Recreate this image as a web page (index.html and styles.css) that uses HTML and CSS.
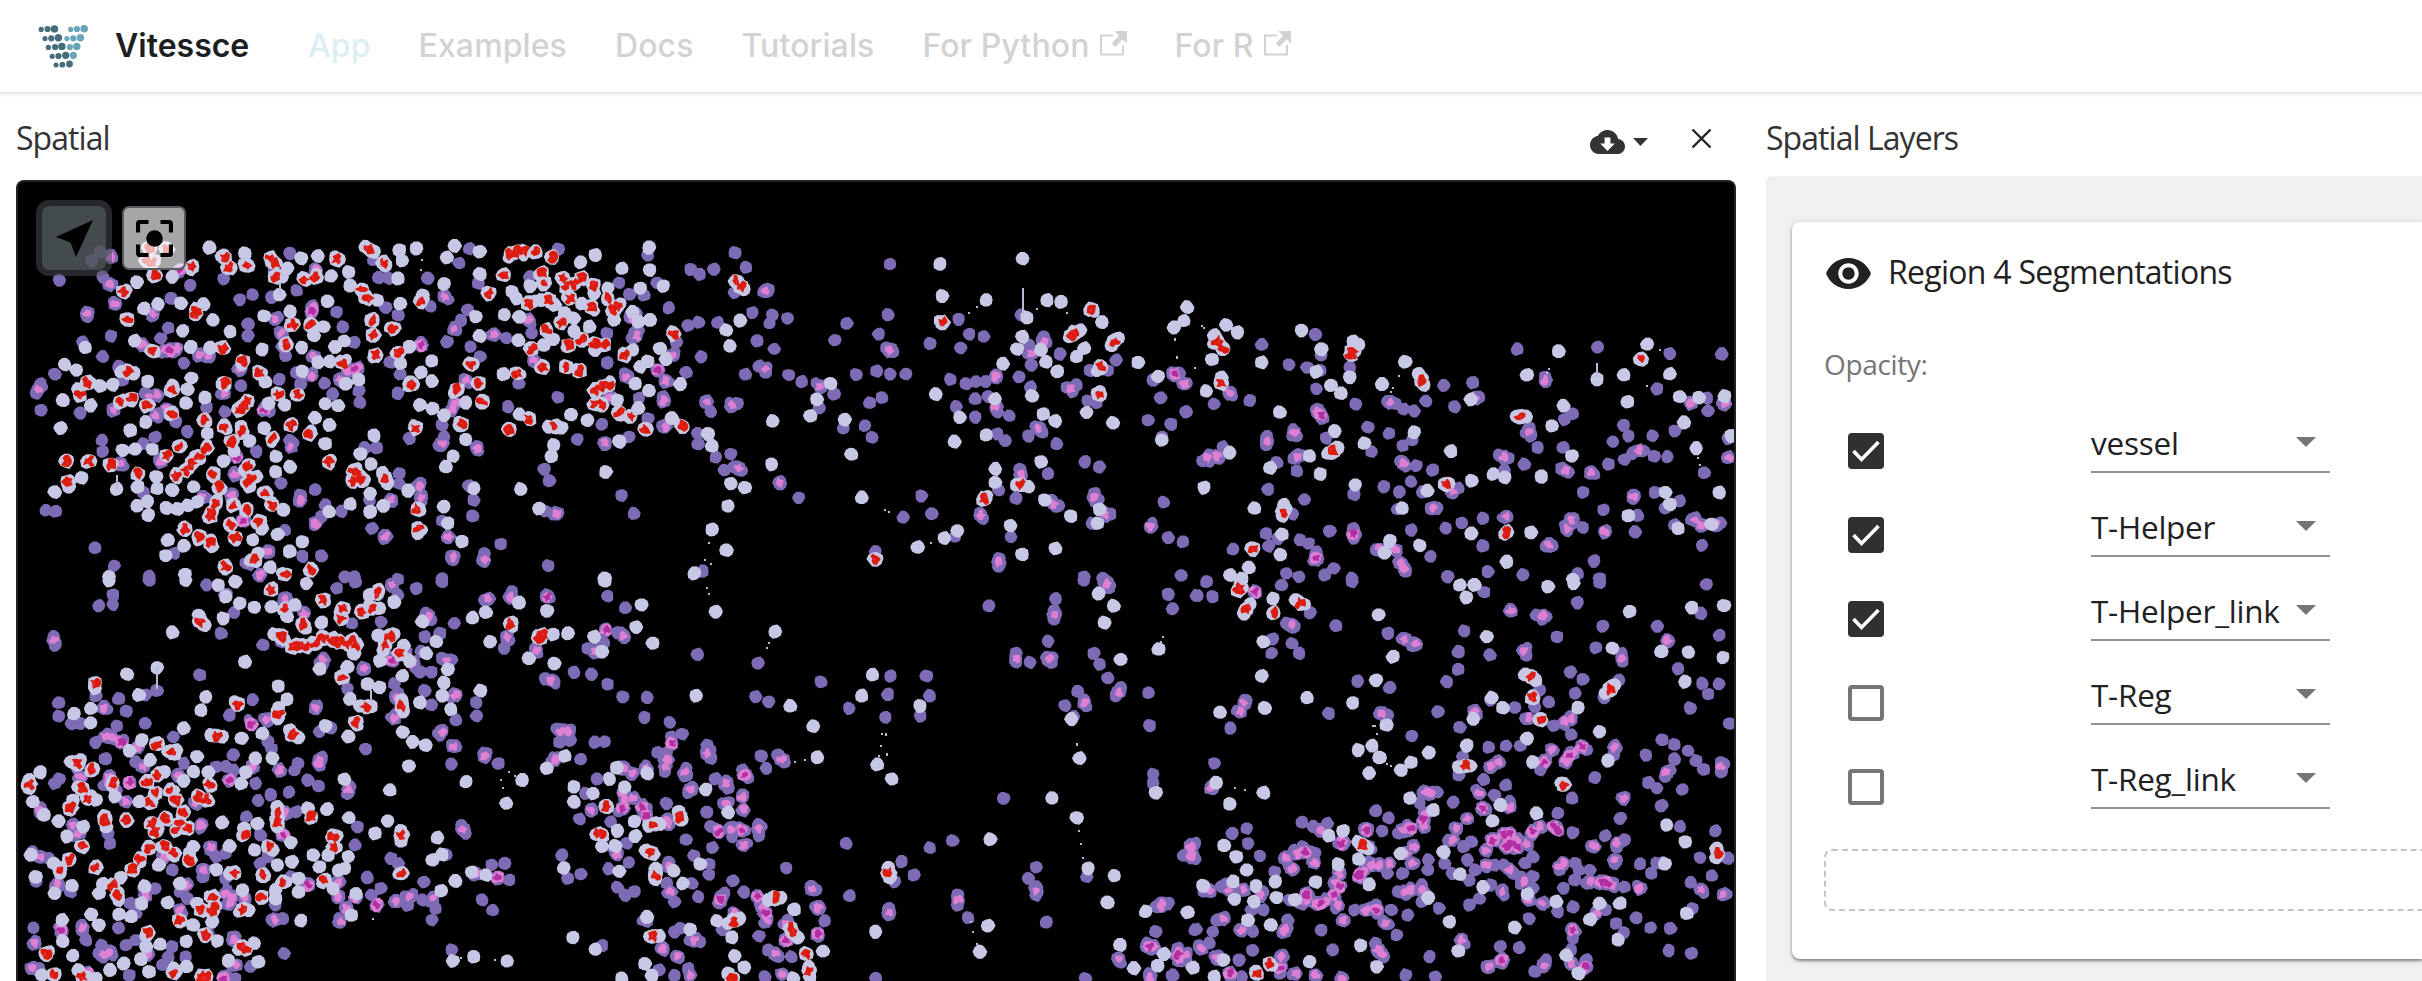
FILE: index.html
```html
<!DOCTYPE html>
<html lang="en">
<head>
<meta charset="utf-8">
<title>Vitessce</title>
<link rel="stylesheet" href="styles.css">
</head>
<body>
<header class="navbar">
  <svg class="logo" width="52" height="46" viewBox="38 24 52 46">
    <g fill="#456d7a">
      <circle cx="41.2" cy="29.4" r="2.6"/><circle cx="47.6" cy="29" r="3.1"/><circle cx="54.5" cy="28.9" r="3.7"/>
      <circle cx="45" cy="38.6" r="2.6"/><circle cx="51.3" cy="38.3" r="3.1"/><circle cx="58.4" cy="37.7" r="3.7"/>
      <circle cx="48.4" cy="47.4" r="2.6"/><circle cx="55.1" cy="47" r="3.1"/><circle cx="61.9" cy="46.4" r="3.7"/>
      <circle cx="52.2" cy="56.3" r="2.6"/><circle cx="58.5" cy="56" r="3.1"/><circle cx="65.7" cy="55.3" r="3.6"/>
      <circle cx="56" cy="65" r="2.5"/><circle cx="62.3" cy="64.7" r="2.9"/><circle cx="69.5" cy="64" r="3.4"/>
    </g>
    <g fill="#68a5b9">
      <circle cx="70.7" cy="29.4" r="2.6"/><circle cx="77" cy="29" r="3.1"/><circle cx="84.2" cy="28.7" r="3.8"/>
      <circle cx="66.9" cy="38.6" r="2.6"/><circle cx="73.3" cy="38.3" r="3.1"/><circle cx="80.4" cy="37.7" r="3.7"/>
      <circle cx="69.9" cy="47" r="3.1"/><circle cx="76.8" cy="46.4" r="3.7"/><circle cx="73.3" cy="55.3" r="3.6"/>
    </g>
  </svg>
  <b class="brand">Vitessce</b>
  <nav class="links">
    <a class="link active">App</a><a class="link">Examples</a><a class="link">Docs</a><a class="link">Tutorials</a>
    <a class="link">For Python<svg class="ext" viewBox="0 0 27 25"><path d="M13 4.500H1v19h22V14" fill="none" stroke="currentColor" stroke-width="2"/><path d="M14.500 0H27v12.500l-4.300-4.300-7.500 7.800-3.500-3.500 7.300-7.700z" fill="currentColor"/></svg></a>
    <a class="link">For R<svg class="ext" viewBox="0 0 27 25"><path d="M13 4.500H1v19h22V14" fill="none" stroke="currentColor" stroke-width="2"/><path d="M14.500 0H27v12.500l-4.300-4.300-7.500 7.800-3.500-3.500 7.300-7.700z" fill="currentColor"/></svg></a>
  </nav>
</header>
<main class="grid">
  <section class="spatial">
    <div class="title-bar">
      <h2 class="title">Spatial</h2>
      <div class="actions">
        <svg class="cloud" width="35" height="24" viewBox="0 4 24 16" preserveAspectRatio="none"><path fill="#333" d="M19.350 10.040C18.670 6.590 15.640 4 12 4 9.110 4 6.600 5.640 5.350 8.040 2.340 8.360 0 10.910 0 14c0 3.310 2.690 6 6 6h13c2.760 0 5-2.240 5-5 0-2.640-2.050-4.780-4.650-4.960zM17 13l-5 5-5-5h3V9h4v4h3z"/></svg>
        <svg class="tri" width="15" height="8" viewBox="0 0 15 8"><path d="M0 0h15L7.500 8z" fill="#333"/></svg>
        <svg class="close" width="21" height="21" viewBox="0 0 21 21"><path d="M1.500 1.500l18 18M19.500 1.500l-18 18" stroke="#222" stroke-width="2.400"/></svg>
      </div>
    </div>
    <div class="viewer">
      <svg id="cells" class="cells" viewBox="18 182 1716 799" preserveAspectRatio="xMinYMin slice"></svg>
      <div class="tools">
        <button class="tool selected"><svg width="37" height="37" viewBox="0 0 37 37"><path d="M37 0L20 37l-5.500-14.500L0 17z"/></svg></button>
        <button class="tool"><svg width="37" height="37" viewBox="0 0 37 37"><g fill="none" stroke="#000" stroke-width="4.200"><path d="M2 12.500V4q0-2 2-2h8.500M24.500 2H33q2 0 2 2v8.500M35 24.500V33q0 2-2 2h-8.500M12.500 35H4q-2 0-2-2v-8.500"/></g><circle cx="18.500" cy="18.500" r="8.300"/></svg></button>
      </div>
    </div>
  </section>
  <section class="layers">
    <div class="title-bar"><h2 class="title">Spatial Layers</h2></div>
    <div class="panel">
      <div class="card">
        <div class="card-head">
          <svg width="45" height="31" viewBox="1 4.500 22 15" preserveAspectRatio="none"><path fill="#212121" d="M12 4.500C7 4.500 2.730 7.610 1 12c1.730 4.390 6 7.500 11 7.500s9.270-3.110 11-7.500c-1.730-4.390-6-7.500-11-7.500zM12 17c-2.760 0-5-2.240-5-5s2.240-5 5-5 5 2.240 5 5-2.240 5-5 5zm0-8c-1.660 0-3 1.340-3 3s1.340 3 3 3 3-1.340 3-3-1.340-3-3-3z"/></svg>
          <span class="card-title">Region 4 Segmentations</span>
        </div>
        <div class="opacity">Opacity:</div>
        <div class="rows">
          <div class="row"><span class="box on"><svg viewBox="0 0 36 36"><path d="M5.500 18l8 8.500L30.500 9"/></svg></span><div class="select">vessel<i class="arrow"></i></div></div>
          <div class="row"><span class="box on"><svg viewBox="0 0 36 36"><path d="M5.500 18l8 8.500L30.500 9"/></svg></span><div class="select">T-Helper<i class="arrow"></i></div></div>
          <div class="row"><span class="box on"><svg viewBox="0 0 36 36"><path d="M5.500 18l8 8.500L30.500 9"/></svg></span><div class="select">T-Helper_link<i class="arrow"></i></div></div>
          <div class="row"><span class="box"></span><div class="select">T-Reg<i class="arrow"></i></div></div>
          <div class="row"><span class="box"></span><div class="select">T-Reg_link<i class="arrow"></i></div></div>
        </div>
        <div class="drop"></div>
      </div>
    </div>
  </section>
</main>
<script src="cells.js"></script>
</body>
</html>
```
FILE: styles.css
```css
* { box-sizing: border-box; }
body { margin: 0; height: 981px; overflow: hidden; background: #fff; color: #212121; font-family: "Open Sans", "Noto Sans", sans-serif; display: flex; flex-direction: column; }
.navbar { flex: none; height: 92px; display: flex; align-items: flex-start; padding: 24px 38px 0; background: #fff; box-shadow: 0 1px 4px 1px rgba(0,0,0,.13); font-family: Inter, sans-serif; font-size: 32px; line-height: 44px; }
.logo { flex: none; }
.brand { width: 194px; padding-left: 25px; font-weight: 600; color: #1c1e21; white-space: nowrap; }
.links { display: flex; gap: 48px; padding-left: 24px; white-space: nowrap; }
.link { color: #d2d2d2; font-weight: 450; letter-spacing: .1px; display: flex; }
.link.active { color: #dcedf3; }
.ext { width: 27px; height: 25px; margin: 7px 0 0 10px; }
.grid { flex: 1; min-height: 0; display: grid; grid-template-columns: 1720px 1fr; gap: 30px; padding-left: 16px; }
.spatial, .layers { display: flex; flex-direction: column; min-width: 0; min-height: 0; }
.title-bar { flex: none; height: 88px; display: flex; justify-content: space-between; }
.layers .title-bar { height: 84px; }
.title { margin: 23px 0 0; font-size: 32px; line-height: 46px; font-weight: 400; letter-spacing: -.95px; color: #333; }
.actions { display: flex; align-items: flex-start; padding: 36px 24px 0 0; }
.cloud { margin-top: 2px; }
.tri { margin: 10px 43px 0 8px; }
.viewer { flex: 1; min-height: 0; position: relative; overflow: hidden; background: #000; border: 2px solid #222; border-bottom: 0; border-radius: 8px 8px 0 0; }
.cells { display: block; width: 1716px; height: 799px; }
.tools { position: absolute; left: 24px; top: 24px; display: flex; gap: 16px; }
.tool { width: 64px; height: 64px; display: flex; align-items: center; justify-content: center; padding: 0; border: 2px solid #555b60; border-radius: 7px; background: rgba(255,255,255,.65); }
.tool.selected { border: 0; background: rgba(80,88,92,.85); box-shadow: 0 0 0 6px rgba(75,79,88,.5); }
.panel { flex: 1; min-height: 0; padding: 46px 0 22px 26px; background: #f0f0f0; border-radius: 6px 0 0 0; }
.card { height: 737px; padding: 32px 0 0 32px; background: #fff; border-radius: 8px 0 0 8px; box-shadow: 0 2px 3px rgba(0,0,0,.4), 0 1px 6px rgba(0,0,0,.12); }
.card-head { display: flex; align-items: center; height: 38px; gap: 17px; padding-left: 2px; }
.card-title { margin-top: -3px; font-size: 32px; line-height: 38px; letter-spacing: -.73px; white-space: nowrap; }
.opacity { margin-top: 53px; height: 39px; font-size: 28px; line-height: 38px; letter-spacing: -.35px; color: #757575; }
.rows { display: flex; flex-direction: column; gap: 32px; margin-top: 37px; padding-left: 24px; }
.row { display: flex; justify-content: flex-start; align-items: flex-start; height: 52px; gap: 207px; }
.box { flex: none; width: 36px; height: 36px; margin-top: 12px; border: 4px solid #757575; border-radius: 4px; }
.box.on { border: 0; background: #303030; }
.box svg { display: block; width: 36px; height: 36px; fill: none; stroke: #fff; stroke-width: 3.6; }
.select { width: 239px; height: 52px; display: flex; justify-content: space-between; border-bottom: 2px solid #919191; font-size: 31.5px; line-height: 43px; letter-spacing: -.25px; white-space: nowrap; }
.arrow { flex: none; width: 0; height: 0; margin: 16px 14px 0 0; border: 10px solid transparent; border-top-color: #757575; border-bottom: 0; }
.drop { height: 62px; margin-top: 40px; border: 2px dashed #c4c4c4; border-right: 0; border-radius: 8px 0 0 8px; }
```
FILE: cells.js
```js
// Cell centres, listed per image tile in tile sample units.
// w: helper cell, r: overlapping helper cells, p: vessel cell, k / m: overlapping vessel cells.
const tiles = [
  { x: 0, y: 180,
    w: "547 203 580 228 640 220 640 250 603 265 787 235 831 228 751 265 737 290 865 288 887 238 910 276 955 200 978 215 1008 257 1044 210 1051 241 1088 206 1040 295 1188 198 1168 232 1254 214 1254 282 1160 312 358 306 450 290 376 385 413 372 473 369 532 372 557 420 601 454 477 452 352 482 222 503 168 553 200 570 205 627 165 660 237 676 295 615 262 618 158 744 340 752 381 726 386 604 450 617 490 628 500 594 486 668 536 653 317 575 350 580 498 500 550 504 690 408 758 395 856 364 820 466 845 440 685 508 730 345 915 317 985 360 1045 372 1105 345 875 500 900 483 831 547 862 545 790 574 788 502 694 605 850 672 884 678 937 598 903 610 701 670 744 676 823 713 860 735 850 791 758 860 721 830 720 875 690 745 541 760 510 830 398 808 353 808 321 810 214 893 180 920 143 936 305 927 408 890 410 925 450 930 360 920 385 965 358 977 388 1005 434 985 463 987 490 977 516 965 438 1080 433 1127 480 1097 505 920 585 843 612 812 630 740 653 783 640 870 651 920 670 890 740 990 684 1046 660 1080 726 1062 757 1115 789 1085 674 1120 706 1162 655 1140 484 1184 285 1190 554 1100 977 767 942 822 970 852 925 870 1000 878 1012 910 967 940 915 972 860 995 967 995 1002 977 1067 932 1160 980 1170 1030 1207 1085 1092 1060 1238 925 1184 828 1165 860 1217 778 1200 735 1217 668 1130 685 1098 675 1160 705 1100 577 1128 543 1128 603 1080 612 1046 550 1070 500 1243 410 1318 404 1356 410 1355 482 1253 468 1338 335 1350 355 1415 360 1385 318 1395 365 1420 496 1450 375 1475 400 1500 415 1520 370 1552 340 1555 225 1517 247 1540 440 1500 455 1315 583 1445 478 1467 743 1433 740 1492 703 1535 720 1357 703 1446 795 1440 828 1360 927 1408 985 1555 510",
    p: "240 243 262 215 155 300 268 290 497 315 447 355 228 410 290 468 215 485 420 475 440 443 268 530 143 582 105 612 95 640 107 690 210 700 480 548 585 297 627 358 660 343 758 220 710 352 648 433 648 467 716 270 775 332 880 396 895 440 925 487 990 293 1014 295 975 240 1118 295 1125 378 1200 250 1226 206 1008 383 1040 405 745 528 630 617 730 598 775 577 848 610 870 642 937 632 941 667 1020 547 1040 640 1046 582 540 683 587 695 460 726 490 755 405 772 375 792 267 780 268 815 320 600 380 640 310 560 785 612 670 815 757 780 620 832 735 910 784 945 823 928 850 975 840 1010 893 993 745 1050 840 1127 790 1130 248 1104 298 1157 390 1188 455 1120 375 937 120 990 145 994 953 803 984 803 1043 880 1042 910 965 960 972 1045 1005 1065 1098 910 1100 945 1155 1022 1225 918 1238 960 1235 1008 1309 1092 1432 1157 1247 800 1160 770 1148 795 1070 775 1155 735 1205 420 1192 450 1168 485 1250 310 1222 390 1292 463 1322 474 1255 530 1355 610 1328 680 1457 652 1508 778 1422 868 1436 902 1385 290 1458 207 1395 545 1390 460 1230 500 900 1190 925 1190 1185 1140 1265 1120 1265 1145 1155 1195 1040 1198 1425 993",
    k: "291 230 285 313 300 372 228 400 400 404 372 495 430 512 462 505 520 525 545 528 100 628 297 690 410 645 408 705 435 690 390 650 628 568 587 640 740 500 720 415 733 460 816 380 825 270 820 530 812 587 890 600 910 575 935 565 1162 350 1186 447 1290 463 1380 420 1217 600 1190 670 1180 690 1155 790 1265 1140 1172 1070 1183 1130 1022 960 1095 920 1100 955 1008 1070 825 1030 784 960 760 800 700 1115 638 1020 607 945 530 950 614 885 314 850 420 845 700 690 680 1185 650 1150 1245 805 1100 495 1395 540 1455 1000",
    m: "445 512 470 270 690 688 617 830 815 395 1100 495 925 568 635 1022",
    r: "500 260 404 285 383 240 437 208 390 205 398 250 322 335 332 417 397 513 583 506 512 402 588 235 597 262 645 257 708 235 718 250 720 290 825 292 795 298 880 238 965 208 1003 248 945 328 960 355 765 433 810 433 748 492 512 388 635 545 678 577 230 608 335 575 343 655 383 677 450 630 450 700 208 645 315 665 587 610 635 677 625 690 645 665 727 643 778 645 760 735 712 775 808 762 632 755 605 785 585 740 533 720 470 800 435 827 520 830 540 805 500 850 485 870 460 885 174 843 232 843 288 855 178 905 360 882 557 882 573 922 565 968 550 1010 553 995 610 975 643 990 603 1035 615 1072 678 1025 710 975 695 938 650 905 655 895 648 855 483 1050 520 1070 550 1088 858 847 926 875 922 903 945 903 940 890 1006 895 1090 988 1093 1045 895 548 982 525 973 420 975 465 1028 445 1042 518 1100 365 1087 745 1072 612 1207 733 1260 665 1195 628 1250 610 1230 553 1278 340 1316 285 1350 215 1335 222 1370 215 1400 215 1443 230 1415 280 1420 310 1470 295 1480 320 1500 310 1520 295 1550 315 1490 355 1435 360 1380 370 1545 382 1467 427 1428 450 1388 507 1420 560 1352 580 1485 495 1520 480 1555 490 1480 560 1515 573 1555 630 1555 672 1330 748 1383 715 1450 740 590 1160 745 1183 812 1170 665 1140" },
  { x: 0, y: 580,
    w: "285 2 485 0 590 50 627 70 665 82 710 80 750 110 570 15 615 5 800 10 770 75 840 127 798 145 520 105 534 135 583 115 450 157 716 162 743 178 640 245 727 318 750 358 728 383 727 415 685 460 757 450 780 472 632 475 410 263 332 282 363 345 237 385 193 402 237 428 248 325 538 350 525 390 480 445 552 465 580 470 515 530 370 480 338 512 392 540 440 515 460 510 850 437 835 267 908 260 925 220 960 312 992 322 915 357 970 380 940 378 910 470 992 243 1002 210 1030 162 988 165 1030 65 990 30 990 85 965 45 1055 197 1070 243 1113 220 1140 185 1103 125 1052 288 1050 360 1054 395 1052 457 1078 485 1112 495 1068 558 1160 308 1155 347 1178 387 1170 268 1098 367 1234 113 1270 97 1356 68 1430 92 1255 332 1280 185 1382 235 1448 250 1483 160 1553 170 1445 163 1476 528 1428 565 1365 600 1218 605 1323 670 1500 620 1500 665 1550 640 1019 630 900 598 1013 722 980 760 1047 752 1047 783 1143 773 1130 840 1155 823 855 688 912 713 805 685 725 680 725 740 668 535 712 535 642 577 630 610 673 730 580 727 545 577 505 575 480 603 430 575 365 665 300 650 205 620 190 660 182 690 250 660 185 545 210 540 105 577 77 600 77 625 85 665 115 705 153 723 272 708 277 740 218 740 175 770 140 850 158 880 93 890 80 825 188 917 142 940 258 940 268 912 315 893 310 960 378 918 370 970 310 1003 343 1010 415 855 470 910 438 968 505 800 495 820 600 798 637 745 665 810 712 810 725 855 763 845 760 787 565 868 600 880 635 930 780 895 780 935 720 957 720 930 818 825 835 860 880 768 858 825 910 830 885 870 900 865 870 925 930 942 918 1005 786 1022 850 900 665 1090 675 1145 597 1142 568 1083 555 1025 515 970 505 1035 487 1085 487 1160 238 1003 258 1035 162 1020 163 1083 190 1127 120 1125 382 1100 418 1093 368 1138 323 1150 287 1170 205 1170 225 1190 390 1175 110 1185 252 1195 455 1165 650 990 1190 903 1233 877 1270 885 1153 933 1183 1143 1238 1130 1325 1143 1497 1073 1555 1108 1473 863",
    p: "295 45 295 73 259 77 140 170 145 195 153 368 153 408 187 432 210 430 273 385 310 357 330 393 250 348 380 345 410 332 523 285 578 160 612 97 540 15 390 0 660 358 600 405 453 470 305 438 250 487 275 537 355 545 610 525 565 560 687 195 735 185 835 455 865 445 833 618 805 600 838 540 770 570 780 550 755 637 707 645 675 663 643 710 668 610 710 505 700 485 775 695 740 765 880 25 928 5 920 130 845 235 843 255 907 325 950 265 955 507 995 125 1087 25 1155 5 1040 45 1033 405 1030 310 1040 340 1085 262 1110 170 1097 275 1127 275 1110 332 1127 375 1150 160 1187 130 1112 100 1125 120 1100 215 1155 235 1180 240 1192 420 1245 368 1245 408 1180 552 1190 498 1302 550 1265 520 1150 465 1265 60 1330 50 1337 35 1318 205 1325 180 1400 205 1425 297 1448 303 1500 277 1545 283 1430 45 1455 447 1490 450 1462 487 1490 480 1555 487 1518 537 1535 205 1560 597 1530 640 1515 717 1545 690 1440 545 910 640 915 620 935 740 928 795 960 893 995 925 970 945 1022 835 1040 850 1108 905 1165 825 1205 735 1217 760 1285 855 1318 850 1330 900 1468 825 1518 882 1483 895 1260 960 1287 990 1128 1020 1138 985 1103 960 1065 975 1060 950 1180 1110 742 1120 710 1020 740 1015 888 1025 720 975 143 610 155 597 85 815 105 700 105 830 125 835 287 790 283 760 185 935 145 920 95 905 340 970 350 975 355 1000 310 1045 225 1080 215 1050 87 1043 160 1060 90 1090 265 1095 290 1115 260 1120 355 1080 330 1095 450 1100 440 1130 485 1130 80 1165 100 1165 338 1185 425 1155 545 1060 615 1070 655 1160 615 1195 585 1190 530 890 550 810 565 830 590 820 450 870 470 935 490 955 475 1000 405 925 700 830 680 850 680 765 760 890 590 895 370 560 590 560 610 570 380 430 480 550",
    k: "140 182 271 383 275 470 295 475 360 500 825 383 697 420 660 560 730 570 833 550 835 540 1190 345 1155 455 1187 500 1265 530 950 265 845 240 795 100 1025 15 1275 57 1335 50 1325 170 1400 210 1440 300 1465 455 1485 455 1450 537 1545 690 1120 110 1165 240 1060 220 1080 250 1030 415 1035 350 910 630 885 950 905 985 888 1025 885 905 1035 965 1070 950 1130 955 1210 748 718 1020 590 940 605 950 550 800 470 990 487 915 532 870 380 925 380 945 430 830 330 665 190 735 205 760 105 687 150 910 210 590 200 560 285 590 280 610 300 630 215 1040 90 1090 285 1115 270 1125 85 1165 105 830 375 560 385 1125 615 1155 612 1080 745 700 590 45 745 55 1245 880 640 955 600 970 1555 215 525 735 465 585 510 670",
    m: "657 432 318 487 340 608 600 600 740 765 805 915 930 950 985 975 1300 893 1430 50 585 1195 228 1180 1025 240 160 1050",
    r: "248 310 410 493 450 517 240 567 565 467 620 372 727 400 765 460 523 125 708 28 745 88 845 60 895 85 893 115 790 133 735 170 780 195 765 200 800 200 825 192 845 175 870 180 885 185 920 180 930 195 905 190 945 98 972 85 985 38 1017 170 1005 195 1045 220 893 293 957 380 930 427 1050 378 1335 130 1418 165 1410 175 77 612 202 550 228 657 215 625 295 608 185 683 275 720 330 722 215 800 182 838 155 868 250 863 345 868 365 838 388 805 405 755 395 730 435 715 460 750 490 745 470 730 480 695 460 660 445 632 407 640 393 668 410 585 385 605 430 800 455 820 495 840 540 660 520 650 548 615 638 762 612 877 687 885 740 907 703 800 725 700 725 728 813 712 870 770 872 800 848 900 1047 767 1050 880 683 950 635 988 555 950 560 975 555 995 525 990 535 1063 468 1022 387 1058 632 1100 640 1105 295 915 307 945 120 1120 142 1183 215 1190 525 1190 540 1190 455 1178 1562 763" },
  { x: 600, y: 180,
    w: "128 203 130 270 57 265 165 318 105 325 20 325 130 420 85 395 100 425 37 420 330 450 367 422 340 498 157 505 172 537 125 545 105 560 92 610 127 632 210 612 45 660 100 685 188 715 50 785 282 762 292 798 342 910 378 923 335 978 293 1048 330 1110 246 1180 15 875 449 853 451 723 567 658 550 707 603 610 640 718 657 823 684 953 888 252 894 348 1104 235 1009 360 1168 360 1205 366 1115 413 1312 427 1255 450 1104 470 1090 507 1053 552 1152 510 1165 545 1195 575 1265 505 1245 530 1353 475 1337 497 1406 547 1458 590 1534 382 1526 422 1500 443 878 642 940 712 926 785 1032 657 1129 648 1158 702 1190 723 1272 697 1340 728 1010 765 1152 845 1033 867 1032 907 1088 915 1118 920 1162 960 1230 1008 1300 1030 1305 988 1072 1037 1103 1123 1190 1105 933 1052 900 1075 830 1102 1468 780 377 327 12 1195 85 510 1300 640",
    p: "125 225 50 308 78 343 115 345 150 310 237 268 260 283 298 268 352 218 381 262 352 338 440 328 427 335 180 383 230 437 257 427 308 428 398 398 443 430 450 405 490 415 410 483 455 507 265 530 225 578 200 487 18 460 18 548 95 400 100 450 85 475 68 583 102 655 165 650 170 605 125 715 5 733 255 760 257 792 303 832 342 822 325 870 350 860 370 870 75 770 56 947 88 1000 342 680 358 670 290 695 380 583 415 558 433 575 493 585 528 605 575 615 612 642 572 683 635 745 692 737 710 772 705 668 737 652 669 583 722 573 759 582 798 582 613 480 645 430 757 252 752 405 728 462 748 503 765 515 862 490 937 418 965 462 1003 470 943 503 915 598 957 612 982 605 1007 605 1035 585 1095 590 1127 555 1125 620 930 680 980 657 1015 650 1038 695 980 712 1069 707 1038 762 1058 782 1140 740 1155 757 1120 768 1193 792 1170 882 1267 845 1305 860 1220 622 1245 615 1235 635 1275 662 1297 668 1202 522 1280 572 1327 572 1349 540 1465 653 1432 720 1492 732 1531 695 1445 600 1468 770 1100 405 1160 470 1120 495 1515 580 1527 610 1098 867 1042 930 1087 955 1180 960 1198 978 1333 1002 1285 1030 1293 940 1295 965 1473 967 1438 1040 1485 1073 1523 1085 1518 1185 1265 1190 1315 1195 993 1000 1000 1015 1073 1070 840 947 867 1002 793 1012 928 1070 519 953 470 910 268 1173 1042 1135 1042 1160 720 1115",
    k: "190 525 170 603 165 663 280 665 470 908 433 333 95 467 80 410 70 590 12 790 25 650 430 568 757 512 575 620 1033 590 1163 485 1127 520 1230 625 1100 885 1293 953 995 1005 1042 1147 1187 972 1497 580 1527 610 1438 1040 362 865 345 675 170 740 1145 745 1320 1005 1035 680",
    m: "150 570 1503 583",
    r: "355 303 368 320 193 463 20 355 45 380 35 392 10 495 65 525 20 615 5 620 50 700 80 708 5 675 118 748 215 738 895 427 1283 388 1230 467 1240 460 1345 485 1307 562 1305 643 1100 915 1003 957 718 1137" },
  { x: 600, y: 580,
    w: "13 3 109 75 303 96 94 142 138 190 5 215 457 155 251 347 497 378 558 438 568 532 712 285 684 347 836 378 725 553 763 597 44 563 25 597 124 580 65 620 277 627 335 697 90 725 127 737 155 732 205 695 212 718 45 752 92 768 40 797 5 800 120 812 140 823 50 873 145 865 145 898 193 873 217 910 262 853 123 1010 130 1070 155 1067 235 1048 305 1022 335 1030 365 1015 345 1073 352 1128 376 1163 117 1152 135 1187 335 1180 57 1195 440 960 472 953 508 988 517 1073 583 1113 545 1160 505 1195 548 1190 753 863 757 893 720 1055 1020 777 1014 1037 993 1115 1181 655 1246 713 1275 865 1343 887 1326 968 1253 535 1232 418 1360 238 1460 208 1318 128 1342 77 1303 40 1452 638 1426 995 1535 997 1359 1095 1473 1122 1457 1158 1395 1165 1550 1163",
    p: "19 48 66 82 45 157 63 172 10 187 255 223 20 313 59 350 124 352 116 412 182 427 215 462 187 470 413 250 407 350 441 365 577 305 651 385 759 288 752 343 746 412 853 288 862 347 837 408 1017 77 1190 57 1187 90 1187 117 1171 183 1087 220 1087 247 1123 247 1168 232 1180 247 1290 220 1306 252 1327 295 1360 323 1348 347 1247 335 1265 360 1270 378 1215 377 1434 338 1436 437 1485 43 1496 87 1558 47 1265 0 1315 10 1330 22 12 485 150 517 175 517 170 575 225 565 222 588 280 495 285 525 290 535 421 528 465 525 482 548 434 565 302 597 330 603 335 625 373 570 387 593 240 622 230 638 174 670 280 697 322 672 372 650 290 740 415 733 415 768 345 770 375 795 225 778 294 803 245 827 180 845 285 853 285 883 70 790 75 848 28 725 22 867 240 910 175 910 45 922 65 945 90 935 195 965 257 950 315 950 325 940 310 970 347 903 376 937 487 865 552 920 563 930 563 980 575 985 588 1022 652 947 643 790 862 803 922 782 788 845 820 885 770 905 755 985 755 1005 1055 655 1140 862 1120 895 1140 920 1140 945 1166 1027 935 945 935 975 962 1013 1445 583 1445 610 1272 890 1238 410 195 1055 210 1045 235 1080 260 1085 415 1068 490 1020 440 1110 465 1130 500 1130 160 1105 200 1130 230 1165 155 1170 195 1187 430 1190 720 1195 570 1060 1553 795 1525 825 1550 830 1465 970 1485 970 1452 1055 1430 1090 1355 1138 1435 1180 1495 1187 1510 1105 1530 1140 1555 1050 1565 1100 1268 1195 320 1050 5 1097",
    k: "62 168 60 565 120 565 85 580 170 560 175 540 280 520 222 577 237 627 330 610 372 650 330 670 375 690 340 745 370 750 415 745 375 795 65 660 60 640 85 655 115 690 175 720 180 730 45 823 180 855 185 935 245 1080 165 1108 203 1130 235 1185 350 1000 425 980 435 1020 430 1000 487 1030 485 1080 458 1120 475 1183 555 927 570 983 475 540 1087 235 1187 103 1173 237 1265 367 1355 335 1325 10 755 997 935 958 1140 933 1545 815 1545 830 1468 973 1430 1100 1437 1190 1510 1120 1530 1125 1355 1138 120 1020",
    m: "15 150 188 490 378 585 60 685 110 680 120 705 310 755 370 750 315 957 413 950 432 1000 568 1063 487 1080 1437 1100 1510 1125",
    r: "17 680 210 713 142 733 5 765 132 818 145 887 140 1070 458 953 350 1022 498 1045 505 1060 540 1122 545 1173 343 1195 755 878" },
  { x: 1150, y: 180,
    w: "199 435 228 457 168 465 162 538 292 547 396 452 448 508 434 575 473 617 499 640 522 592 531 485 545 495 667 545 606 612 703 582 715 615 838 658 985 585 1068 513 1168 598 1238 585 1300 492 1358 582 1248 665 1080 677 1050 737 958 710 982 710 339 697 147 633 187 593 208 818 417 827 484 753 490 803 465 820 445 882 314 863 536 915 560 790 690 757 786 813 725 932 840 903 780 910 897 882 927 893 1023 890 1103 828 1384 650 1434 652 1502 648 1395 727 1518 768 1427 805 1488 937 1347 937 1359 973 1250 1007 1380 1045 1467 1033 996 1057 932 1145 840 1060 705 1097 627 1083 613 1118 659 985 273 985 350 975 345 1007 345 1063 340 1123 258 1163 209 1185 240 1195 141 923 1105 1198",
    p: "292 493 432 462 363 555 410 562 445 570 447 525 435 627 522 562 537 672 261 662 167 672 94 695 207 637 435 690 450 715 460 775 374 750 382 768 305 770 305 795 190 800 180 835 155 825 138 843 332 847 375 835 395 825 384 873 569 742 579 815 625 760 660 797 685 780 655 843 665 855 696 857 739 870 682 905 651 935 612 920 533 943 308 928 403 958 373 1002 303 1060 310 1098 217 1108 335 1075 391 1080 415 1090 435 1115 435 1140 470 1053 532 1045 532 1075 620 665 640 670 662 688 690 693 721 663 796 680 767 617 844 608 860 652 712 935 790 940 805 925 735 985 750 985 773 1045 815 1030 870 1015 869 1098 883 1175 683 1050 647 988 590 1110 655 1150 668 1175 733 1130 960 507 1170 500 1033 590 1033 605 1358 520 1494 522 1325 627 1455 655 1412 665 1458 692 1500 675 1104 700 1083 718 990 743 996 768 1013 803 1080 803 1075 865 1092 877 1152 875 912 825 937 835 978 852 926 870 1238 735 1250 767 1210 785 1240 838 1260 820 1290 812 1317 828 1352 830 1313 767 1371 753 1198 852 1448 877 1320 937 1385 963 1347 985 1275 1007 1268 1055 1190 1055 1185 990 1132 937 1107 1015 1095 1030 1090 1052 1131 1043 932 1010 1035 1097 1050 1097 1370 1035 1415 1018 1440 1035 1490 1030 1442 1095 1160 1143 1118 1180 975 1185 778 1190 527 1195 480 1165 457 1185 357 1180 390 1190 1175 1195 1510 775",
    k: "208 640 438 695 450 712 377 758 305 782 150 835 175 828 628 667 850 655 663 850 790 932 738 985 932 1010 1042 1095 1188 1055 1100 1020 1090 1045 1152 877 1087 872 925 832 990 755 1033 600 1263 950 1512 832 1413 670 1502 672 1278 812 1425 1020 1440 1035 1480 1035 642 1110 600 1108 655 1150 665 1165 435 1130 532 1063 385 830",
    m: "447 705 532 1063 435 1135",
    r: "175 483 190 507 187 610 527 515 525 525 478 813 708 603 772 913 348 995 268 1107 968 710 931 1057 1283 535" },
  { x: 1150, y: 580,
    w: "235 10 262 72 246 100 322 55 380 60 403 73 597 105 635 230 590 300 529 368 411 353 300 384 183 397 291 288 296 185 297 638 209 672 172 608 617 435 580 497 544 510 600 533 573 580 655 570 682 547 729 517 680 655 740 690 655 820 767 817 810 882 870 922 727 953 783 1025 573 913 545 838 570 805 543 785 505 753 467 767 492 853 433 905 378 960 331 953 327 905 277 917 217 905 221 958 272 965 256 1020 316 1035 252 870 225 830 194 797 138 918 99 997 36 1122 20 1158 112 1163 193 1140 168 1190 417 1145 551 1097 592 1160 805 1113 953 1042 987 942 1010 700 915 675 895 722 1000 545 985 475 1020 415 1118 383 1175 455 1197 542 1190 340 1212 315 1008 300 980 283 998 355 922 383 893 353 845 417 828 497 807 560 837 558 880 170 826 52 848 15 810 15 1040 20 1107 10 1253 94 1415 82 1500 77 1208 204 1336 215 1407 217 1497 232 1398 305 1350 735 1398 785 1345 852 1480 805 1480 832 1062 965 1175 970 1228 970 1150 1018 1223 1080 1088 1125 1120 1180 1403 1000",
    p: "147 5 47 43 124 47 163 50 59 87 344 15 418 98 357 130 375 142 320 177 317 220 371 190 389 220 486 138 622 160 660 175 685 188 543 303 626 323 467 400 250 360 235 395 210 445 600 400 620 405 685 467 168 550 165 625 753 395 776 305 805 268 806 215 820 153 888 225 873 37 810 442 850 393 890 360 528 5 943 90 1010 105 1035 110 1064 170 1117 68 1182 138 1165 203 975 210 983 225 1099 275 1131 298 1112 340 1187 353 1225 300 1233 220 1235 245 1326 138 1352 180 1440 100 1488 165 1453 13 1175 7 1380 267 1443 310 1487 312 1458 343 1411 384 1515 430 1018 330 1005 380 983 415 953 383 1042 365 1055 437 1080 428 1100 410 1100 463 968 497 930 497 885 502 1050 510 1020 570 1140 510 1215 500 1210 525 1296 525 1338 480 1370 493 1405 512 1370 537 1427 542 1447 568 1492 547 1492 575 1360 570 1345 590 1302 607 1325 625 1392 628 1337 677 1162 592 1103 655 1229 715 1065 700 1105 758 818 530 807 585 872 598 930 615 900 645 860 640 940 665 792 667 750 637 712 640 705 670 590 692 623 713 397 727 427 740 463 730 560 745 606 752 648 760 720 700 665 755 215 760 253 745 256 790 287 828 118 790 90 825 113 835 355 830 325 875 375 870 400 800 430 820 420 815 365 960 185 920 200 910 235 930 140 935 15 980 40 970 295 935 265 990 295 990 235 1050 270 1055 175 1020 195 1015 165 1055 121 1048 15 1055 360 1020 355 1050 448 1050 478 1110 535 990 570 990 590 975 630 990 610 1025 645 1065 673 1005 755 985 710 965 650 935 710 915 727 840 725 870 660 880 620 880 600 850 770 850 790 880 833 900 830 840 820 800 840 785 780 780 850 870 835 975 860 955 890 915 920 930 880 855 900 855 925 855 950 880 970 890 1000 890 980 850 1000 830 1000 925 1030 970 1105 980 1065 995 990 1015 813 1080 915 1100 965 1103 920 1150 880 1160 590 1090 610 1130 730 1130 668 1185 745 1190 268 1110 232 1140 340 1130 340 1180 130 1105 155 1090 170 1130 60 1185 210 1190 240 1190 1190 767 1155 800 1240 780 1220 800 1215 850 1280 852 1325 850 1310 880 1150 870 1120 870 1110 850 1070 870 1110 900 1080 925 1140 910 1170 910 1210 910 1240 920 1280 925 1270 1013 1218 1030 1238 1058 1308 1043 1360 1045 1355 1112 1415 1120 1105 1050 1105 1075 1100 1110 1140 1140 1130 1170 1035 1140 1005 1175 1385 740 1478 752 1437 833 1468 887 1413 908 1440 930 1498 943 1418 985 1190 990 1510 835",
    k: "370 135 665 178 695 192 608 400 235 395 245 370 943 92 1028 108 1352 182 1233 233 977 212 848 395 990 415 1085 425 1100 415 1050 510 1215 503 1237 655 1350 578 1492 560 913 547 890 560 860 640 870 685 940 680 830 715 800 745 790 780 735 640 720 635 720 700 680 745 715 740 660 750 565 750 445 750 505 785 570 800 690 800 670 820 685 850 625 850 580 855 560 870 600 855 495 880 485 910 405 815 385 820 430 848 355 835 370 865 410 940 390 965 435 970 460 960 410 960 490 975 503 1020 565 990 595 990 615 1030 665 935 680 930 710 930 880 855 940 870 975 905 920 935 990 960 1025 970 900 780 880 810 950 800 960 780 985 790 1000 760 1020 740 1060 740 1080 850 1070 860 1160 800 1220 790 1215 840 1150 905 1180 910 1210 915 1280 925 1340 850 1440 928 1498 943 1165 1000 240 1050 355 1045 350 1055 245 930 205 930 290 945 160 625 155 930 28 980 105 800 110 825 135 1105 175 1135 75 1120 75 1140 345 1130 380 1180 432 1185 500 1195 813 1080 605 1120 595 1110 920 1140 885 1160 1030 1155 1100 1150 1140 1160 10 1100 1130 500 1105 520 1085 545 1030 545 190 1015",
    m: "275 35 1030 545 1130 500 1095 525 870 685 715 720 680 745 565 750 500 790 405 815 495 920 480 945 410 945 545 890 550 880 590 990 895 780 925 765 945 790 960 800 940 760 1000 755 1055 740 1065 750 1180 905 1195 910 1105 1050 1135 1160 75 1120 210 1180 340 1165 920 1140 445 970 930 800",
    r: "230 30 235 25 323 98 253 88 392 68 993 290 998 353 1020 420 1082 615 1202 328 823 558 1482 818 555 797 278 1180 312 1150" },
];

const NS = "http://www.w3.org/2000/svg";
const svg = document.getElementById("cells");
let seed = 7;
const rand = () => (seed = (seed * 16807) % 2147483647) / 2147483647;

function blob(x, y, r, rough) {
  const n = 10;
  let d = "";
  for (let i = 0; i < n; i++) {
    const a = (i / n) * Math.PI * 2;
    const q = r * (1 - rough / 2 + rand() * rough);
    d += (i ? "L" : "M") + (x + q * Math.cos(a)).toFixed(1) + " " + (y + q * Math.sin(a)).toFixed(1);
  }
  return d + "z";
}
function layer(keys, radius, fill, rough, spread = 0) {
  let d = "";
  for (const t of tiles) for (const k of keys) {
    const v = t[k].split(" ").map(Number);
    for (let i = 0; i + 1 < v.length; i += 2) {
      const dx = (rand() - 0.5) * spread;
      const dy = (rand() - 0.5) * spread;
      d += blob(t.x + v[i] * 0.3827 + dx, t.y + v[i + 1] / 3 + dy, radius, rough);
    }
  }
  const p = document.createElementNS(NS, "path");
  p.setAttribute("d", d);
  p.setAttribute("fill", fill);
  svg.appendChild(p);
}
layer(["p"], 6.6, "#7e6bb5", 0.2);
layer(["k", "m"], 7.4, "#7e6bb5", 0.3);
layer(["k", "m"], 5.5, "#7e6bb5", 0.2, 9);
layer(["k"], 4.4, "#de7fd3", 0.8);
layer(["m"], 6, "#de7fd3", 0.6);
layer(["m"], 3.8, "#b12fa3", 1);
layer(["w"], 7, "#c7c8e5", 0.18);
layer(["r"], 7.8, "#c7c8e5", 0.3);
layer(["r"], 5.8, "#c7c8e5", 0.2, 8);
layer(["r"], 4.9, "#db1c0a", 1);
layer(["r"], 1.3, "#e8264c", 0.6, 5);

// Thin tails and faint link dots between cells.
const marks = document.createElementNS(NS, "path");
marks.setAttribute("d", "M1023 288v26M117 475v14M157 667v22M1597 363v14M280 283v12M371 690v12M384 259v2M422 259v2M421 269v2M969 312v2M977 306v2M1037 308v2M1031 313v2M1067 312v2M886 733v3M887 753v3M881 745v2M882 733v2M879 755v2M1077 743v3M1079 830v2M1081 843v2M1083 857v2M709 542v2M705 559v2M711 563v2M707 587v2M709 593v2M769 642v2M767 647v2M795 761v2M805 759v2M885 509v2M889 511v2M931 542v2M1175 338v3M1177 356v3M1202 325v2M1204 327v2M1195 367v2M1393 387v2M1391 391v2M1399 375v2M1547 372v2M1549 368v2M1660 349v2M1647 385v2M1698 457v2M1700 464v2M1235 787v2M1245 789v2M1375 725v2M1377 733v2M1373 725v2M1387 763v2M1391 765v2M373 918v2M461 957v2M473 958v2M495 959v2M509 771v2M515 775v2M501 779v2M503 787v2M971 921v2M973 931v2M977 943v2M1163 636v2M1161 641v2");
marks.setAttribute("stroke", "#b9bad6");
marks.setAttribute("stroke-width", "2");
svg.appendChild(marks);
```
